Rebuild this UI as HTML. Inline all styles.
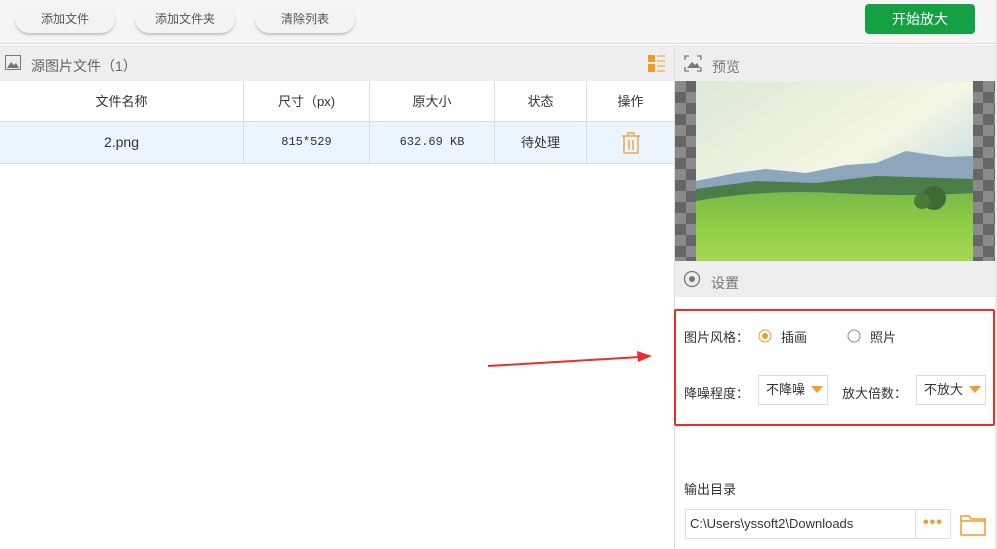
<!DOCTYPE html><html><head><meta charset="utf-8"><style>
*{margin:0;padding:0;box-sizing:border-box}
body{width:997px;height:549px;overflow:hidden;background:#fff;font-family:"Liberation Sans","Noto Sans CJK SC",sans-serif;font-size:13px;color:#333;position:relative}
.a{position:absolute}
.btn{position:absolute;top:5px;height:28px;border-radius:14px;background:#f3f3f3;box-shadow:0 2px 2px rgba(0,0,0,.2);font-size:12px;color:#555;text-align:center;line-height:28px}
.th,.td{position:absolute;text-align:center;border-right:1px solid #ddd}
.th{top:81px;height:41px;line-height:41px;background:#fff}
.td{top:122px;height:41px;line-height:41px;background:#eaf5fd}
.chk{background-color:#8a8a8a;background-image:linear-gradient(45deg,#666 25%,transparent 25%,transparent 75%,#666 75%),linear-gradient(45deg,#666 25%,transparent 25%,transparent 75%,#666 75%);background-size:22px 22px;background-position:0 0,11px 11px}
</style></head><body>
<div class="a" style="left:0;top:0;width:997px;height:44px;background:#f5f5f5;border-bottom:1px solid #ddd"></div>
<div class="btn" style="left:15px;width:100px">添加文件</div>
<div class="btn" style="left:135px;width:100px">添加文件夹</div>
<div class="btn" style="left:255px;width:100px">清除列表</div>
<div class="a" style="left:865px;top:4px;width:110px;height:30px;background:#15a043;border-radius:4px;color:#fff;font-size:14px;text-align:center;line-height:30px">开始放大</div>
<div class="a" style="left:0;top:45px;width:674px;height:36px;background:#eee"></div>
<svg class="a" style="left:5px;top:55px" width="16" height="15"><rect x="0.5" y="0.5" width="15" height="14" fill="none" stroke="#777"/><path d="M2 13 L6 7 L9 10 L11 8 L14 13Z" fill="#777"/></svg>
<div class="a" style="left:31px;top:56px;font-size:14px;color:#666">源图片文件（1）</div>
<svg class="a" style="left:648px;top:55px" width="17" height="17"><rect x="0" y="0" width="7" height="7" fill="#f39a2b"/><rect x="0" y="9" width="7" height="8" fill="#f39a2b"/><path d="M9 1h8M9 6h8M9 11h8M9 16h8" stroke="#f39a2b"/></svg>
<div class="th" style="left:0;width:244px">文件名称</div>
<div class="th" style="left:244px;width:126px">尺寸（px)</div>
<div class="th" style="left:370px;width:125px">原大小</div>
<div class="th" style="left:495px;width:92px">状态</div>
<div class="th" style="left:587px;width:87px;border-right:0">操作</div>
<div class="a" style="left:0;top:121px;width:674px;border-top:1px solid #ddd"></div>
<div class="td" style="left:0;width:244px;font-size:14px">2.png</div>
<div class="td" style="left:244px;width:126px;font-family:'Liberation Mono',monospace;font-size:12px">815*529</div>
<div class="td" style="left:370px;width:125px;font-family:'Liberation Mono',monospace;font-size:12px">632.69 KB</div>
<div class="td" style="left:495px;width:92px">待处理</div>
<div class="td" style="left:587px;width:87px;border-right:0"></div>
<svg class="a" style="left:621px;top:132px" width="20" height="22"><path d="M1 4h18M7 4V1h6v3M3 4v17h14V4M8 8v10M12 8v10" fill="none" stroke="#f39a2b" stroke-width="1.3"/></svg>
<div class="a" style="left:0;top:163px;width:674px;border-top:1px solid #ddd"></div>
<div class="a" style="left:674px;top:45px;width:1px;height:504px;background:#ddd"></div>
<div class="a" style="left:675px;top:45px;width:320px;height:36px;background:#eee"></div>
<svg class="a" style="left:684px;top:55px" width="18" height="17"><path d="M1 5V1h4M13 1h4v4M17 12v4h-4M5 16H1v-4" fill="none" stroke="#777" stroke-width="1.3"/><path d="M3 13l5-6 3 3 2-2 3 5z" fill="#777"/></svg>
<div class="a" style="left:712px;top:57px;font-size:14px;color:#777">预览</div>
<div class="a chk" style="left:675px;top:81px;width:320px;height:180px"></div>
<svg class="a" style="left:696px;top:81px" width="277" height="180"><defs><linearGradient id="s" x1="0" y1="0" x2="1" y2="1"><stop offset="0" stop-color="#dde9d8"/><stop offset=".5" stop-color="#f3f6e3"/><stop offset="1" stop-color="#9cc8dc"/></linearGradient><linearGradient id="g" x1="0" y1="0" x2="0" y2="1"><stop offset="0" stop-color="#79b94a"/><stop offset=".5" stop-color="#8fcf45"/><stop offset="1" stop-color="#a6d654"/></linearGradient></defs><rect width="277" height="180" fill="url(#s)"/><path d="M0 100 L40 92 L70 88 L110 92 L150 84 L180 82 L210 70 L250 76 L277 75 L277 120 L0 120Z" fill="#8ea6bd"/><path d="M0 108 L60 100 L120 102 L180 95 L277 98 L277 125 L0 125Z" fill="#4a7d4a"/><path d="M0 120 Q70 108 140 112 T277 112 L277 180 L0 180Z" fill="url(#g)"/><circle cx="238" cy="117" r="12" fill="#3f6a36"/><circle cx="226" cy="120" r="8" fill="#4b7a3c"/></svg>
<div class="a" style="left:675px;top:261px;width:320px;height:36px;background:#eee"></div>
<svg class="a" style="left:683px;top:270px" width="18" height="18"><circle cx="9" cy="9" r="7.5" fill="none" stroke="#777" stroke-width="1.3"/><circle cx="9" cy="9" r="3" fill="#777"/></svg>
<div class="a" style="left:711px;top:273px;font-size:14px;color:#777">设置</div>
<div class="a" style="left:995px;top:0;width:2px;height:549px;background:#e8e8e8"></div>
<div class="a" style="left:674px;top:309px;width:321px;height:117px;border:2px solid #e8302a;border-radius:2px"></div>
<div class="a" style="left:684px;top:327px;font-size:13px">图片风格：</div>
<svg class="a" style="left:758px;top:329px" width="14" height="14"><circle cx="7" cy="7" r="6" fill="none" stroke="#f39a2b"/><circle cx="7" cy="7" r="3" fill="#f39a2b"/></svg>
<div class="a" style="left:781px;top:327px">插画</div>
<svg class="a" style="left:847px;top:329px" width="14" height="14"><circle cx="7" cy="7" r="6" fill="none" stroke="#888"/></svg>
<div class="a" style="left:870px;top:327px">照片</div>
<div class="a" style="left:684px;top:383px">降噪程度：</div>
<div class="a" style="left:758px;top:375px;width:70px;height:30px;border:1px solid #ddd;line-height:28px;padding-left:7px">不降噪</div>
<svg class="a" style="left:811px;top:386px" width="12" height="8"><path d="M0 0h12L6 7z" fill="#f39a2b"/></svg>
<div class="a" style="left:842px;top:383px">放大倍数：</div>
<div class="a" style="left:916px;top:375px;width:70px;height:30px;border:1px solid #ddd;line-height:28px;padding-left:7px">不放大</div>
<svg class="a" style="left:969px;top:386px" width="12" height="8"><path d="M0 0h12L6 7z" fill="#f39a2b"/></svg>
<div class="a" style="left:684px;top:479px">输出目录</div>
<div class="a" style="left:685px;top:509px;width:266px;height:30px;border:1px solid #ddd;line-height:28px;padding-left:4px;font-size:13px">C:\Users\yssoft2\Downloads</div>
<div class="a" style="left:915px;top:509px;width:1px;height:30px;background:#ddd"></div>
<div class="a" style="left:923px;top:514px;color:#f39a2b;font-size:16px;font-weight:bold;letter-spacing:1px">•••</div>
<svg class="a" style="left:960px;top:513px" width="26" height="23"><path d="M1 3h8l2 3h14v16H1z M1 8h24" fill="none" stroke="#f39a2b" stroke-width="1.5"/></svg>
<svg class="a" style="left:480px;top:345px" width="180" height="30"><path d="M8 21 L160 12" stroke="#e8302a" stroke-width="2"/><path d="M172 11 L157 6 L158 17z" fill="#e8302a"/></svg>
</body></html>
